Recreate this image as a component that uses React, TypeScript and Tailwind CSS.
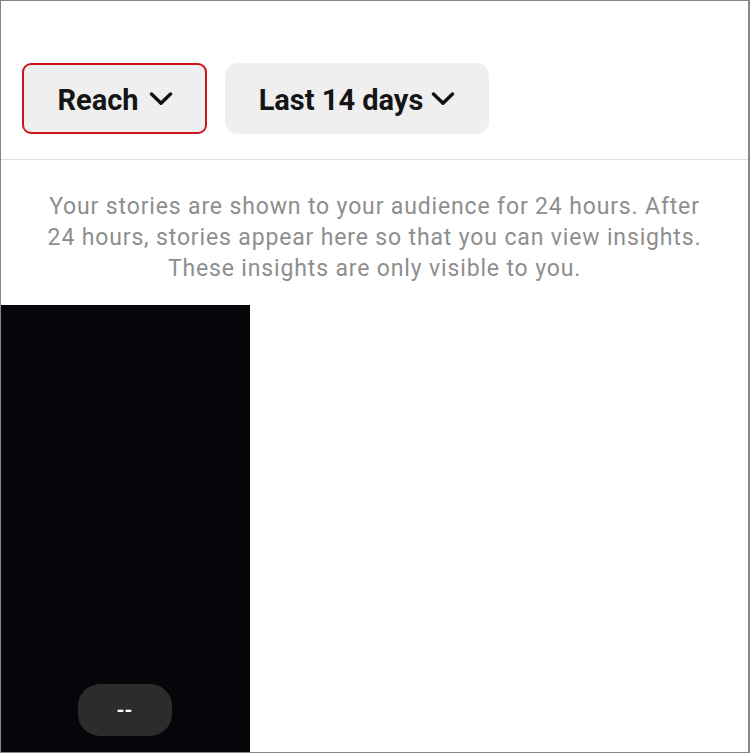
import React from "react";

function Chevron() {
  return (
    <svg width="24" height="14" viewBox="0 0 24 14" fill="none">
      <path d="M2.5 2 L12 11.2 L21.5 2" stroke="#111" strokeWidth="3.4" strokeLinecap="round" strokeLinejoin="round" />
    </svg>
  );
}

export default function App() {
  return (
    <div className="w-[750px] h-[754px] bg-white overflow-hidden" style={{ fontFamily: "Roboto, 'Liberation Sans', sans-serif" }}>
      <div className="w-[750px] h-[753px] border-t border-l border-b border-r-2 border-[#858585] flex flex-col">
        <div className="flex gap-[18px] pl-[21px] pt-[62px] pb-[25px] border-b border-[#dddddd]">
          <div className="h-[71px] w-[185px] rounded-[9px] border-2 border-[#d0121b] bg-[#efefef] flex items-center justify-center gap-[10px] pl-[1px]">
            <span className="mt-[4px] text-[29px] font-bold text-[#151515] leading-none">Reach</span>
            <Chevron />
          </div>
          <div className="h-[71px] w-[264px] rounded-[13px] bg-[#efefef] flex items-center justify-center gap-[8px]">
            <span className="mt-[4px] text-[29px] font-bold text-[#151515] leading-none">Last 14 days</span>
            <Chevron />
          </div>
        </div>
        <div className="pt-[31px] px-[20px] text-center text-[23px] tracking-[0.85px] leading-[31px] text-[#8e8e8e] font-normal">
          <p>Your stories are shown to your audience for 24 hours. After</p>
          <p>24 hours, stories appear here so that you can view insights.</p>
          <p>These insights are only visible to you.</p>
        </div>
        <div className="mt-[21px] flex-1 flex">
          <div className="w-[249px] h-full bg-[#07040a] flex flex-col justify-end items-center pb-[16px]">
            <div className="w-[94px] h-[52px] rounded-[22px] bg-[#2c2c2c] flex items-center justify-center mr-[2px]">
              <span className="text-white text-[20px] font-bold leading-none">--</span>
            </div>
          </div>
        </div>
      </div>
    </div>
  );
}
